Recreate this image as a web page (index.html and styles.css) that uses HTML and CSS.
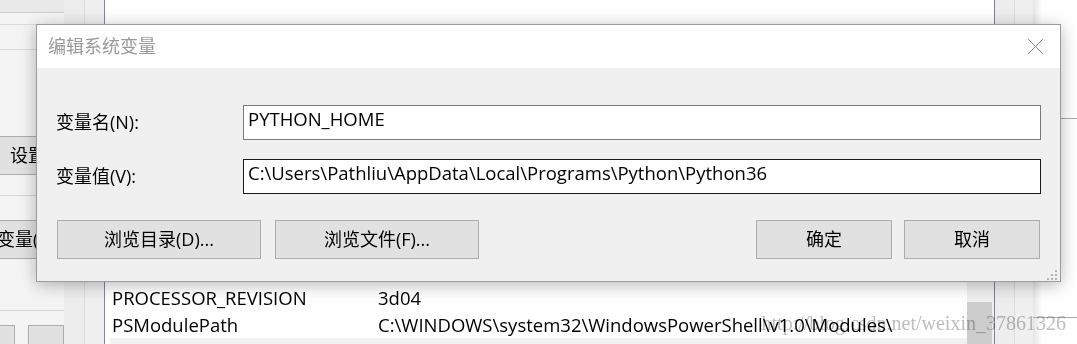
FILE: index.html
```html
<!DOCTYPE html>
<html lang="zh-CN">
<head>
  <title>编辑系统变量</title>
  <meta charset="utf-8">
  <meta name="viewport" content="width=device-width, initial-scale=1">
  <link rel="stylesheet" href="styles.css">
</head>
<body>
  <div class="desk">
    <aside class="side">
      <div class="side-top"></div>
      <div class="side-group side-group-short"></div>
      <div class="side-group side-group-tall"></div>
      <button class="side-btn side-btn-first">设置(T)...</button>
      <div class="side-rule side-rule-mid"></div>
      <button class="side-btn side-btn-second">变量(N)...</button>
      <div class="side-rule side-rule-low"></div>
      <div class="side-boxes">
        <div class="side-box side-box-small"></div>
        <div class="side-box side-box-large"></div>
      </div>
    </aside>

    <div class="gutter">
      <div class="gutter-half gutter-half-left"></div>
      <div class="gutter-half"></div>
    </div>

    <section class="list">
      <div class="list-rows">
        <div class="row">
          <span class="row-name">PROCESSOR_REVISION</span>
          <span class="row-value">3d04</span>
        </div>
        <div class="row">
          <span class="row-name">PSModulePath</span>
          <span class="row-value">C:\WINDOWS\system32\WindowsPowerShell\v1.0\Modules\</span>
        </div>
        <div class="row row-selected"></div>
      </div>
      <div class="scrollbar">
        <div class="scrollbar-thumb"></div>
      </div>
    </section>

    <div class="gutter gutter-right">
      <div class="gutter-half gutter-half-left"></div>
      <div class="gutter-half"></div>
    </div>

    <div class="outside">
      <div class="outside-line outside-line-top"></div>
      <div class="outside-line outside-line-low"></div>
    </div>

    <div class="dialog">
      <div class="dialog-title">
        <span>编辑系统变量</span>
        <svg class="close" width="15" height="15" viewBox="0 0 15 15">
          <path d="M0 0 L15 15 M15 0 L0 15" stroke="#8a8a8a" stroke-width="1" fill="none"/>
        </svg>
      </div>
      <div class="dialog-body">
        <div class="fields">
          <label class="field-label">变量名(N):</label>
          <div class="field">PYTHON_HOME</div>
          <label class="field-label">变量值(V):</label>
          <div class="field field-focus">C:\Users\Pathliu\AppData\Local\Programs\Python\Python36</div>
        </div>
        <div class="actions">
          <button class="btn btn-wide">浏览目录(D)...</button>
          <button class="btn btn-wide">浏览文件(F)...</button>
          <button class="btn btn-push">确定</button>
          <button class="btn">取消</button>
        </div>
        <svg class="grip" width="12" height="12" viewBox="0 0 12 12">
          <rect x="9" y="1" width="2" height="2" fill="#b4b4b4"/>
          <rect x="5" y="5" width="2" height="2" fill="#b4b4b4"/>
          <rect x="9" y="5" width="2" height="2" fill="#b4b4b4"/>
          <rect x="1" y="9" width="2" height="2" fill="#b4b4b4"/>
          <rect x="5" y="9" width="2" height="2" fill="#b4b4b4"/>
          <rect x="9" y="9" width="2" height="2" fill="#b4b4b4"/>
        </svg>
      </div>
    </div>

    <div class="watermark">http://blog.csdn.net/weixin_37861326</div>
  </div>
</body>
</html>
```
FILE: styles.css
```css
* {
  margin: 0;
  box-sizing: border-box;
}

body {
  margin: 0;
  width: 1077px;
  height: 344px;
  overflow: hidden;
  background-color: #FFFFFF;
  color: #000000;
  font-family: "Open Sans", "Noto Sans CJK SC", sans-serif;
  font-size: 18px;
}

button {
  padding: 0;
  font: inherit;
  color: inherit;
}

.desk {
  position: relative;
  display: flex;
  height: 344px;
  overflow: hidden;
}

/* window behind, on the left */

.side {
  flex: none;
  width: 64px;
  background-color: #F4F4F4;
  box-shadow: 1px 0 3px rgba(0, 0, 0, 0.12);
}

.side-top {
  height: 13px;
  background-color: #E9E9E9;
  border-bottom: 1px solid #CFCFCF;
}

.side-group {
  border-bottom: 1px solid #DCDCDC;
}

.side-group-short {
  height: 12px;
}

.side-group-tall {
  height: 25px;
}

.side-btn {
  display: block;
  width: 100%;
  height: 39px;
  border: 1px solid #ADADAD;
  border-left: 0;
  background-color: #E1E1E1;
  line-height: 37px;
  text-align: left;
  white-space: nowrap;
  overflow: hidden;
}

.side-btn-first {
  margin-top: 86px;
  padding-left: 10px;
}

.side-btn-second {
  margin-top: 24px;
  text-indent: -3px;
}

.side-rule {
  height: 1px;
  background-color: #D5D5D5;
}

.side-rule-mid {
  margin-top: 20px;
}

.side-rule-low {
  margin-top: 51px;
}

.side-boxes {
  display: flex;
  gap: 13px;
  margin-top: 14px;
}

.side-box {
  height: 30px;
  border: 1px solid #ADADAD;
  background-color: #E1E1E1;
}

.side-box-small {
  width: 17px;
  border-left: 0;
}

.side-box-large {
  width: 40px;
}

/* window frame strips */

.gutter {
  flex: none;
  display: flex;
  width: 40px;
}

.gutter-right {
  width: 38px;
  box-shadow: 2px 0 5px rgba(0, 0, 0, 0.12);
}

.gutter-half {
  flex: 1;
  background-color: #F0F0F0;
}

.gutter-half-left {
  background-color: #EDEDED;
  border-right: 1px solid #DCDCDC;
}

.list {
  flex: none;
  display: flex;
  width: 891px;
  border-left: 1px solid #828790;
  border-right: 1px solid #828790;
  background-color: #FFFFFF;
}

.list-rows {
  flex: 1;
  padding: 284px 0 0 5px;
}

.row {
  display: flex;
  height: 27px;
  font-size: 18.5px;
  line-height: 27px;
  white-space: nowrap;
}

.row-name {
  flex: none;
  width: 268px;
  padding-left: 2px;
}

.row-selected {
  background-color: #F2F2F2;
}

.scrollbar {
  flex: none;
  width: 27px;
  margin-top: 60px;
  background-color: #F0F0F0;
}

.scrollbar-thumb {
  width: 25px;
  height: 60px;
  margin-top: 242px;
  background-color: #CDCDCD;
}

.outside {
  flex: 1;
  background: linear-gradient(to right, #E4E4E4, #FFFFFF 9px);
}

.outside-line {
  height: 1px;
  background-color: #A8A8A8;
}

.outside-line-top {
  margin-top: 118px;
}

.outside-line-low {
  margin-top: 198px;
}

/* the dialog on top */

.dialog {
  position: absolute;
  left: 36px;
  top: 24px;
  display: flex;
  flex-direction: column;
  width: 1025px;
  height: 258px;
  border: 1px solid #9C9C9C;
  background-color: #F0F0F0;
  box-shadow: 0 3px 16px rgba(0, 0, 0, 0.28);
}

.dialog-title {
  display: flex;
  align-items: center;
  justify-content: space-between;
  height: 43px;
  padding: 0 17px 0 11px;
  background-color: #FFFFFF;
  color: #999999;
  line-height: 43px;
}

.close {
  display: block;
}

.dialog-body {
  position: relative;
  flex: 1;
  padding-top: 37px;
}

.fields {
  display: grid;
  grid-template-columns: 187px 1fr;
  grid-auto-rows: 35px;
  row-gap: 19px;
  padding: 0 19px;
}

.field-label {
  line-height: 35px;
  white-space: nowrap;
}

.field {
  height: 35px;
  padding: 0 0 8px 4px;
  border: 1px solid #7A7A7A;
  background-color: #FFFFFF;
  font-size: 18.5px;
  line-height: 25px;
  white-space: nowrap;
  overflow: hidden;
}

.field-focus {
  border-color: #1A1A1A;
}

.actions {
  display: flex;
  gap: 14px;
  margin-top: 26px;
  padding: 0 20px;
}

.btn {
  width: 136px;
  height: 39px;
  border: 1px solid #ADADAD;
  background-color: #E1E1E1;
  line-height: 37px;
  text-align: center;
  white-space: nowrap;
}

.btn-wide {
  width: 204px;
}

.btn-push {
  margin-left: auto;
  margin-right: -2px;
}

.grip {
  position: absolute;
  right: 2px;
  bottom: 0;
}

.watermark {
  position: absolute;
  right: 11px;
  top: 313px;
  color: #BEBEBE;
  mix-blend-mode: multiply;
  font-family: "Liberation Serif", serif;
  font-size: 20px;
  line-height: 20px;
  white-space: nowrap;
}
```
